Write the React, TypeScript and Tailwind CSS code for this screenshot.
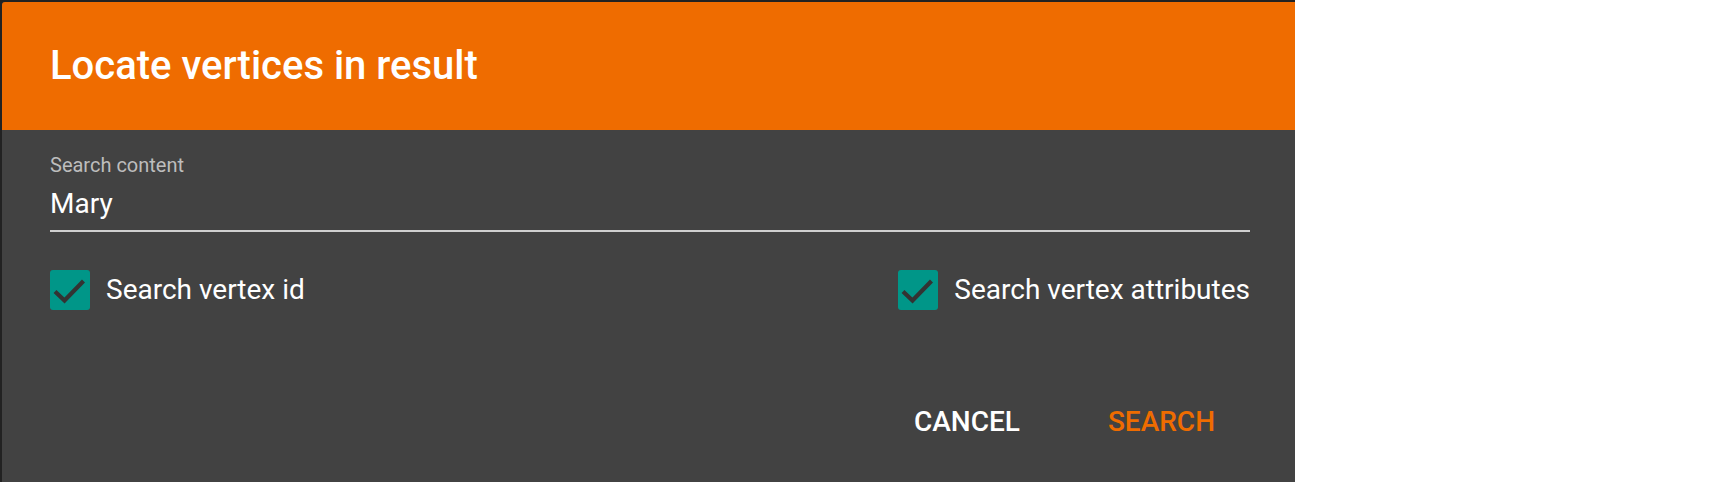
import { useState } from 'react';

function CheckBox({ label, checked, onToggle }: { label: string; checked: boolean; onToggle: () => void }) {
  return (
    <label className="flex items-center gap-[16px] cursor-pointer select-none" onClick={onToggle}>
      <span
        className={`w-[40px] h-[40px] rounded-[3px] flex items-center justify-center ${
          checked ? 'bg-[#009688]' : 'border-2 border-[#bdbdbd]'
        }`}
      >
        {checked && (
          <svg width="40" height="40" viewBox="0 0 40 40">
            <path d="M5 21.5 L14.5 30.5 L33.5 11" fill="none" stroke="#333" strokeWidth="4.2" />
          </svg>
        )}
      </span>
      <span className="text-[28px] leading-[32px] text-white">{label}</span>
    </label>
  );
}

export default function App() {
  const [query, setQuery] = useState('Mary');
  const [searchId, setSearchId] = useState(true);
  const [searchAttrs, setSearchAttrs] = useState(true);

  return (
    <div className="w-[1722px] h-[482px] bg-white overflow-hidden" style={{ fontFamily: 'Roboto, "Liberation Sans", sans-serif' }}>
      <div className="w-[1295px] h-[482px] bg-[#222] pt-[2px] pl-[2px] flex">
        <div className="flex-1 flex flex-col rounded-tl-[3px] overflow-hidden bg-[#424242]">
          <div className="h-[128px] bg-[#ef6c00] flex items-center px-[48px]">
            <h1 className="text-[40px] font-medium text-white leading-none">Locate vertices in result</h1>
          </div>

          <div className="pl-[48px] pr-[45px] pt-[23px] flex flex-col">
            <div className="text-[20px] leading-[24px] text-[#bdbdbd]">Search content</div>
            <input
              value={query}
              onChange={(e) => setQuery(e.target.value)}
              className="mt-[11px] pb-[10px] text-[28px] leading-[32px] text-white bg-transparent outline-none border-b-2 border-[#cfcfcf]"
            />

            <div className="mt-[38px] flex items-center justify-between">
              <CheckBox label="Search vertex id" checked={searchId} onToggle={() => setSearchId(!searchId)} />
              <CheckBox label="Search vertex attributes" checked={searchAttrs} onToggle={() => setSearchAttrs(!searchAttrs)} />
            </div>

            <div className="mt-[96px] flex justify-end items-center gap-[88px] pr-[35px]">
              <button className="text-[28px] leading-[32px] font-medium text-white uppercase">Cancel</button>
              <button className="text-[28px] leading-[32px] font-medium text-[#ef6c00] uppercase">Search</button>
            </div>
          </div>
        </div>
      </div>
    </div>
  );
}
